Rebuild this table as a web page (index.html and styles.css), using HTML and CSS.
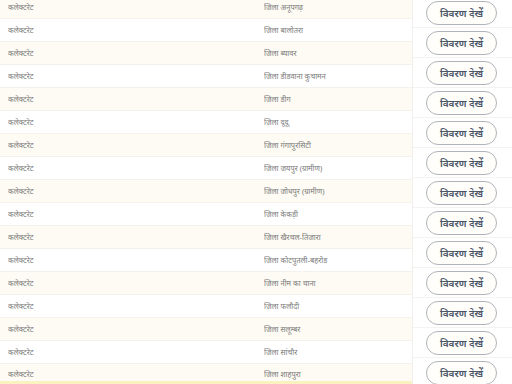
FILE: index.html
```html
<!DOCTYPE html>
<html lang="hi">
<head>
<meta charset="utf-8">
<link rel="stylesheet" href="styles.css">
</head>
<body>
<div class="page">
  <div class="table">
    <div class="row"><span class="c1">कलेक्टरेट</span><span class="c2">जिला अनूपगढ़</span></div>
    <div class="row"><span class="c1">कलेक्टरेट</span><span class="c2">जिला बालोतरा</span></div>
    <div class="row"><span class="c1">कलेक्टरेट</span><span class="c2">जिला ब्यावर</span></div>
    <div class="row"><span class="c1">कलेक्टरेट</span><span class="c2">जिला डीडवाना कुचामन</span></div>
    <div class="row"><span class="c1">कलेक्टरेट</span><span class="c2">जिला डीग</span></div>
    <div class="row"><span class="c1">कलेक्टरेट</span><span class="c2">जिला दूदू</span></div>
    <div class="row"><span class="c1">कलेक्टरेट</span><span class="c2">जिला गंगापुरसिटी</span></div>
    <div class="row"><span class="c1">कलेक्टरेट</span><span class="c2">जिला जयपुर (ग्रामीण)</span></div>
    <div class="row"><span class="c1">कलेक्टरेट</span><span class="c2">जिला जोधपुर (ग्रामीण)</span></div>
    <div class="row"><span class="c1">कलेक्टरेट</span><span class="c2">जिला केकड़ी</span></div>
    <div class="row"><span class="c1">कलेक्टरेट</span><span class="c2">जिला खैरथल-तिजारा</span></div>
    <div class="row"><span class="c1">कलेक्टरेट</span><span class="c2">जिला कोटपुतली-बहरोड</span></div>
    <div class="row"><span class="c1">कलेक्टरेट</span><span class="c2">जिला नीम का थाना</span></div>
    <div class="row"><span class="c1">कलेक्टरेट</span><span class="c2">जिला फलौदी</span></div>
    <div class="row"><span class="c1">कलेक्टरेट</span><span class="c2">जिला सलूम्बर</span></div>
    <div class="row"><span class="c1">कलेक्टरेट</span><span class="c2">जिला सांचौर</span></div>
    <div class="row last"><span class="c1">कलेक्टरेट</span><span class="c2">जिला शाहपुरा</span></div>
  </div>
  <div class="actions">
    <div class="act"><button class="btn">विवरण देखें</button></div>
    <div class="act"><button class="btn">विवरण देखें</button></div>
    <div class="act"><button class="btn">विवरण देखें</button></div>
    <div class="act"><button class="btn">विवरण देखें</button></div>
    <div class="act"><button class="btn">विवरण देखें</button></div>
    <div class="act"><button class="btn">विवरण देखें</button></div>
    <div class="act"><button class="btn">विवरण देखें</button></div>
    <div class="act"><button class="btn">विवरण देखें</button></div>
    <div class="act"><button class="btn">विवरण देखें</button></div>
    <div class="act"><button class="btn">विवरण देखें</button></div>
    <div class="act"><button class="btn">विवरण देखें</button></div>
    <div class="act"><button class="btn">विवरण देखें</button></div>
    <div class="act"><button class="btn">विवरण देखें</button></div>
  </div>
</div>
</body>
</html>
```

FILE: styles.css
```css
html, body {
  margin: 0;
  padding: 0;
  background: #ffffff;
  overflow: hidden;
}
body {
  font-family: "Noto Sans", "Noto Sans Devanagari", sans-serif;
  width: 512px;
  height: 384px;
}
.page {
  display: flex;
  margin-top: -4px;
}
.table {
  width: 412px;
  display: flex;
  flex-direction: column;
  border-right: 1px solid #f0efeb;
}
.row {
  display: grid;
  grid-template-columns: 256px 1fr;
  height: 23px;
  align-items: center;
  border-bottom: 1px solid #f4f2ec;
  box-sizing: border-box;
  font-size: 7.5px;
  color: #7a7a7a;
}
.row:nth-child(odd) {
  background: #fdfbf3;
}
.row.last {
  height: 20px;
  border-bottom: 3px solid #fbf2c2;
  padding-top: 2px;
}
.c1 {
  padding-left: 8px;
}
.c2 {
  padding-left: 8px;
}
.actions {
  flex: 1;
  display: flex;
  flex-direction: column;
  padding-top: 2px;
}
.act {
  height: 30px;
  display: flex;
  align-items: center;
  justify-content: center;
  border-bottom: 1px solid #f4f3ef;
  box-sizing: border-box;
}
.btn {
  width: 71px;
  height: 24px;
  border: 1.5px solid #b0b4ba;
  border-radius: 12px;
  background: #fffefb;
  color: #4a5568;
  font-family: "Noto Sans", "Noto Sans Devanagari", sans-serif;
  font-weight: 600;
  font-size: 10px;
  padding: 0;
  margin-right: 2px;
}
```
